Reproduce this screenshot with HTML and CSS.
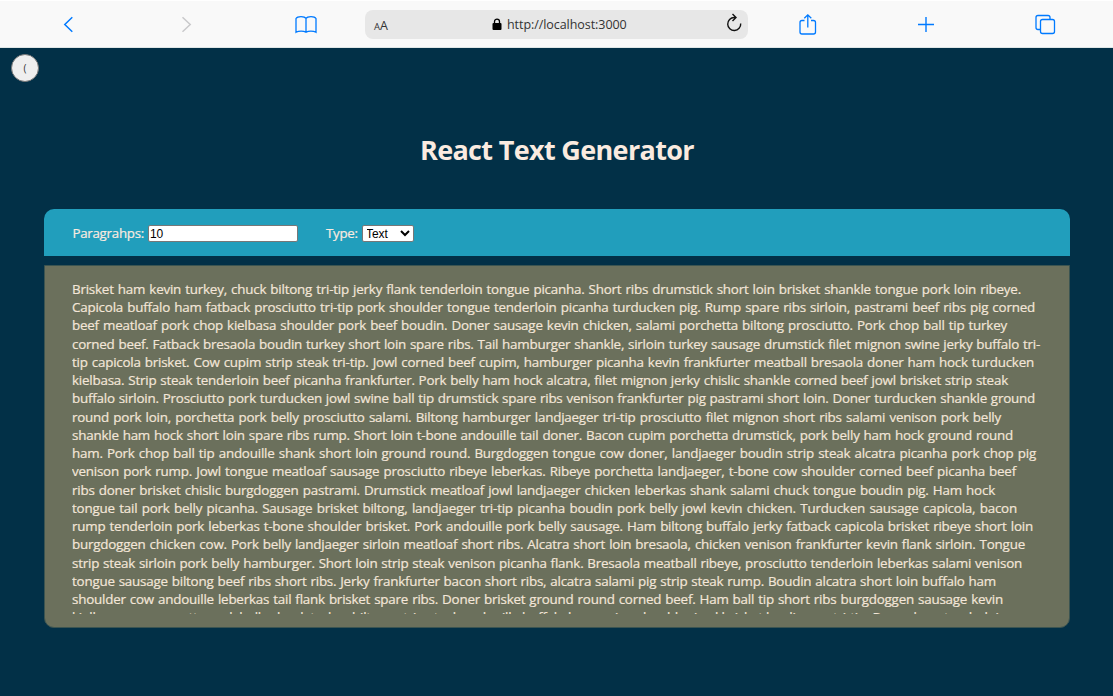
FILE: index.html
```
<!DOCTYPE html>
<html lang="en">
<head>
<meta charset="utf-8">
<title>React Text Generator</title>
<link rel="stylesheet" href="styles.css">
</head>
<body>
<header class="toolbar">
  <svg class="icon" viewBox="0 0 24 24"><path d="M16.3 5.3 8.8 12.5l7.500 7.200" stroke-width="1.500"/></svg>
  <svg class="icon disabled" viewBox="0 0 24 24"><path d="m8.500 5.300 7.700 7.200-7.700 7.200" stroke-width="1.500"/></svg>
  <svg class="icon" viewBox="0 0 24 24"><path d="M12 6.500C10.500 4 3.500 4 2 6.500v13.800c2.800-1.500 7.500-1.500 10 0 2.500-1.500 7.200-1.500 10 0V6.500c-1.500-2.500-8.500-2.500-10 0v13.800"/></svg>
  <div class="address">
    <span class="reader"><small>A</small>A</span>
    <span class="url"><svg class="lock" viewBox="0 0 10 13"><path d="M1.500 5h7q1 0 1 1v5q0 1-1 1h-7q-1 0-1-1V6q0-1 1-1z" fill="#000"/><path d="M2.500 5V3.500C2.500.2 7.500.2 7.500 3.500V5" fill="none" stroke="#000" stroke-width="1.300"/></svg>http://localhost:3000</span>
    <svg class="reload" viewBox="0 0 18 20"><path d="M15.700 10.500A6.500 6.500 0 1 1 9.200 4.500h1.800M7.500 1l3.500 3.500L7.500 8"/></svg>
  </div>
  <svg class="icon" viewBox="0 0 24 24"><path d="M8.500 8.500H6q-2 0-2 2V20q0 2 2 2h11.500q2 0 2-2v-9.500q0-2-2-2h-2.500M11.800 15.500V3M8.300 6.200 11.800 2.800l3.500 3.400"/></svg>
  <svg class="icon" viewBox="0 0 24 24"><path d="M12 5v15M4 12.500h16" stroke-width="1.400"/></svg>
  <svg class="icon" viewBox="0 0 24 24"><path d="M7.500 17.500H5q-2 0-2-2v-10q0-2 2-2h10q2 0 2 2v2"/><rect x="7.500" y="7.500" width="14" height="14" rx="2"/></svg>
</header>
<button class="back">(</button>
<main class="page">
  <h1 class="title">React Text Generator</h1>
  <form class="controls">
    <label class="label count-label" for="count">Paragrahps:</label>
    <input class="count" id="count" value="10">
    <label class="label type-label" for="type">Type:</label>
    <span class="type-wrap"><select class="type" id="type"><option>Text</option></select></span>
  </form>
  <section class="output">
    <div class="text">
      <p style="width:949px">Brisket ham kevin turkey, chuck biltong tri-tip jerky flank tenderloin tongue picanha. Short ribs drumstick short loin brisket shankle tongue pork loin ribeye.</p>
      <p style="width:963px">Capicola buffalo ham fatback prosciutto tri-tip pork shoulder tongue tenderloin picanha turducken pig. Rump spare ribs sirloin, pastrami beef ribs pig corned</p>
      <p style="width:935px">beef meatloaf pork chop kielbasa shoulder pork beef boudin. Doner sausage kevin chicken, salami porchetta biltong prosciutto. Pork chop ball tip turkey</p>
      <p style="width:968px">corned beef. Fatback bresaola boudin turkey short loin spare ribs. Tail hamburger shankle, sirloin turkey sausage drumstick filet mignon swine jerky buffalo tri-</p>
      <p style="width:962px">tip capicola brisket. Cow cupim strip steak tri-tip. Jowl corned beef cupim, hamburger picanha kevin frankfurter meatball bresaola doner ham hock turducken</p>
      <p style="width:936px">kielbasa. Strip steak tenderloin beef picanha frankfurter. Pork belly ham hock alcatra, filet mignon jerky chislic shankle corned beef jowl brisket strip steak</p>
      <p style="width:963px">buffalo sirloin. Prosciutto pork turducken jowl swine ball tip drumstick spare ribs venison frankfurter pig pastrami short loin. Doner turducken shankle ground</p>
      <p style="width:929px">round pork loin, porchetta pork belly prosciutto salami. Biltong hamburger landjaeger tri-tip prosciutto filet mignon short ribs salami venison pork belly</p>
      <p style="width:941px">shankle ham hock short loin spare ribs rump. Short loin t-bone andouille tail doner. Bacon cupim porchetta drumstick, pork belly ham hock ground round</p>
      <p style="width:964px">ham. Pork chop ball tip andouille shank short loin ground round. Burgdoggen tongue cow doner, landjaeger boudin strip steak alcatra picanha pork chop pig</p>
      <p style="width:944px">venison pork rump. Jowl tongue meatloaf sausage prosciutto ribeye leberkas. Ribeye porchetta landjaeger, t-bone cow shoulder corned beef picanha beef</p>
      <p style="width:923px">ribs doner brisket chislic burgdoggen pastrami. Drumstick meatloaf jowl landjaeger chicken leberkas shank salami chuck tongue boudin pig. Ham hock</p>
      <p style="width:945px">tongue tail pork belly picanha. Sausage brisket biltong, landjaeger tri-tip picanha boudin pork belly jowl kevin chicken. Turducken sausage capicola, bacon</p>
      <p style="width:961px">rump tenderloin pork leberkas t-bone shoulder brisket. Pork andouille pork belly sausage. Ham biltong buffalo jerky fatback capicola brisket ribeye short loin</p>
      <p style="width:953px">burgdoggen chicken cow. Pork belly landjaeger sirloin meatloaf short ribs. Alcatra short loin bresaola, chicken venison frankfurter kevin flank sirloin. Tongue</p>
      <p style="width:950px">strip steak sirloin pork belly hamburger. Short loin strip steak venison picanha flank. Bresaola meatball ribeye, prosciutto tenderloin leberkas salami venison</p>
      <p style="width:924px">tongue sausage biltong beef ribs short ribs. Jerky frankfurter bacon short ribs, alcatra salami pig strip steak rump. Boudin alcatra short loin buffalo ham</p>
      <p style="width:931px">shoulder cow andouille leberkas tail flank brisket spare ribs. Doner brisket ground round corned beef. Ham ball tip short ribs burgdoggen sausage kevin</p>
      <p style="width:928px">kielbasa cow pancetta pork belly shank turkey biltong strip steak andouille buffalo ham swine shoulder jowl brisket landjaeger tri-tip. Bacon ham tenderloin</p>
    </div>
  </section>
</main>
</body>
</html>
```
FILE: styles.css
```
* { box-sizing: border-box; }
body { margin: 0; height: 696px; overflow: hidden; background: #023047; font-family: "Open Sans", "Noto Sans", sans-serif; color: #faebe0; }
.toolbar { display: grid; grid-template-columns: 118px 120px 71px 431px 118px 119px 24px; padding-left: 56px; height: 48px; align-items: center; background: #f9f9f9; border-top: 1px solid #fff; border-bottom: 1px solid #dfe6e6; }
.icon { width: 24px; height: 24px; fill: none; stroke: #007aff; stroke-width: 1.3; }
.disabled { stroke: #c9c9cb; }
.address { width: 383px; height: 29px; border-radius: 8px; background: #e7e7e7; display: grid; grid-template-columns: 118px 1fr 31px; padding-left: 9px; align-items: center; color: #333; font-size: 12.5px; }
.reader { padding-top: 2px; }
.reader small { font-size: 9.5px; }
.url { display: flex; align-items: center; gap: 5px; padding-top: 1px; letter-spacing: -.06px; }
.lock { width: 10px; height: 13px; }
.reload { width: 18px; height: 20px; margin: -2px 0 0 8px; fill: none; stroke: #111; stroke-width: 1.4; }
.back { display: grid; place-items: center; width: 28px; height: 28px; margin: 6px 0 0 11px; padding: 0; border: 1px solid #777; border-radius: 50%; background: #efefef; color: #333; font: 10px "Open Sans", sans-serif; }
.page { padding: 47px 43.5px 0 44.4px; }
.title { margin: 0 0 39px; height: 41px; line-height: 41px; text-align: center; font-size: 27px; font-weight: 700; letter-spacing: -.66px; }
.controls { display: flex; align-items: center; height: 47px; padding: 2px 28px 0; background: #219ebc; border-radius: 10px 10px 0 0; font-size: 13.3px; }
.label { margin-top: -2px; letter-spacing: -.25px; -webkit-text-stroke: .2px currentColor; }
.count-label { width: 75.5px; }
.count { width: 150px; height: 17px; padding: 0 1px; border: 1px solid #777; border-radius: 2px; background: #fff; font: 12px "Liberation Sans", sans-serif; }
.type-label { width: 36.5px; margin-left: 28px; }
.type { width: 52px; height: 17px; padding: 0; border: 1px solid #777; border-radius: 2px; background: #fff; color: #000; font: 12px "Liberation Sans", sans-serif; text-indent: -1px; }
.type-wrap { display: flex; margin-left: -.5px; }
.output { height: 363px; margin-top: 9px; padding: 14px 26.6px 12px; border: 1px solid #3b5451; background: #6b705c; border-radius: 0 0 10px 10px; }
.text { height: 334px; overflow: hidden; color: #f3e6d8; font-size: 13.4px; line-height: 18.24px; letter-spacing: -.21px; -webkit-text-stroke: .2px currentColor; }
.text p { margin: 0; height: 18.24px; white-space: nowrap; text-align-last: justify; }
```
